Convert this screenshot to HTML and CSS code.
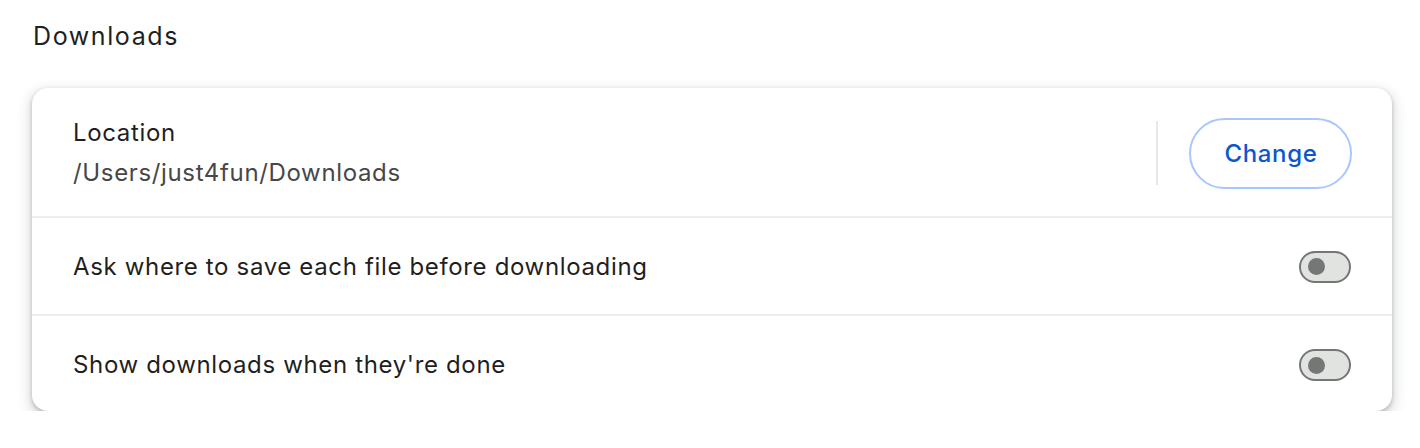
FILE: index.html
```html
<!DOCTYPE html>
<html>
<head>
<meta charset="utf-8">
<link rel="stylesheet" href="styles.css">
</head>
<body>
<main class="page">
  <h2 class="section-title">Downloads</h2>
  <section class="card">
    <div class="row row-location">
      <div class="row-text">
        <div class="label">Location</div>
        <div class="sublabel">/Users/just4fun/Downloads</div>
      </div>
      <div class="divider"></div>
      <button class="btn">Change</button>
    </div>
    <div class="row row-toggle">
      <div class="label">Ask where to save each file before downloading</div>
      <span class="toggle"><span class="knob"></span></span>
    </div>
    <div class="row row-toggle">
      <div class="label">Show downloads when they're done</div>
      <span class="toggle"><span class="knob"></span></span>
    </div>
  </section>
</main>
</body>
</html>
```
FILE: styles.css
```css
* { box-sizing: border-box; }
html, body { margin: 0; padding: 0; background: #ffffff; }
body {
  font-family: Inter, "Noto Sans", "Liberation Sans", sans-serif;
  color: #1f1f1f;
}
.page {
  padding: 20px 28px 0 32px;
}
.section-title {
  margin: 0 0 0 1px;
  font-size: 25px;
  letter-spacing: 1.6px;
  line-height: 32px;
  font-weight: 400;
  color: #1f1f1f;
  height: 68px;
}
.card {
  width: 1360px;
  background: #fff;
  border-radius: 16px;
  box-shadow: 0 2px 4px rgba(60,64,67,.30), 0 5px 12px 4px rgba(60,64,67,.14);
  overflow: hidden;
}
.row {
  display: flex;
  align-items: center;
  padding: 0 41px 0 41px;
}
.row + .row { border-top: 2px solid #ededed; }
.row-location { height: 128px; padding-top: 2px; }
.row-toggle { height: 98px; padding-top: 1px; }
.row-toggle:last-child { height: 97px; padding-top: 3px; }
.row-text { flex: 1; display: flex; flex-direction: column; gap: 8px; }
.label { flex: 1; font-size: 24px; letter-spacing: 0.65px; line-height: 32px; color: #1f1f1f; }
.row-text .label { flex: none; }
.sublabel { font-size: 24px; letter-spacing: 0.65px; line-height: 32px; color: #474747; }
.divider {
  width: 2px;
  height: 64px;
  background: #e8e8e8;
  margin-right: 31px;
}
.btn {
  width: 163px;
  height: 71px;
  border: 2px solid #a8c7fa;
  border-radius: 36px;
  background: #fff;
  color: #0b57d0;
  font-family: inherit;
  font-size: 24px;
  letter-spacing: 0.65px;
  font-weight: 500;
  padding: 0 0 0 1px;
  margin-right: -1px;
}
.toggle {
  position: relative;
  width: 52px;
  height: 32px;
  border: 2px solid #747775;
  border-radius: 16px;
  background: #e1e3e1;
  display: flex;
  align-items: center;
  padding-left: 7px;
}
.knob {
  width: 17px;
  height: 17px;
  border-radius: 50%;
  background: #747775;
}
```
